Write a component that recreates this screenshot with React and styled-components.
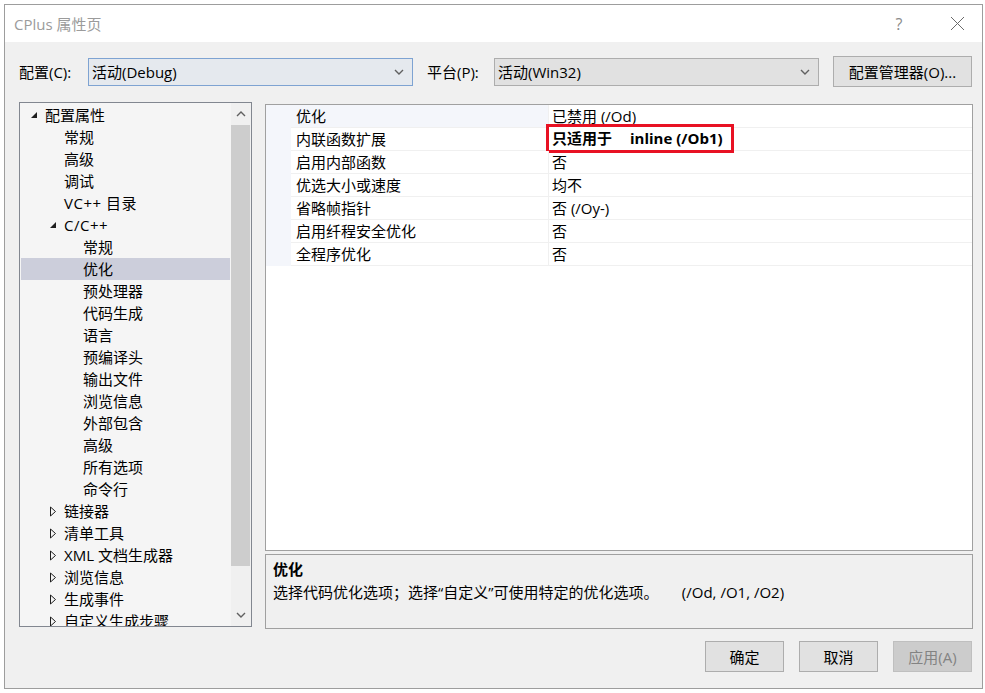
import React from "react";
import styled, { createGlobalStyle } from "styled-components";

const Global = createGlobalStyle`
  html, body { margin: 0; padding: 0; background: #ffffff; }
  body { font-family: "Open Sans", "Noto Sans CJK SC", sans-serif; font-size: 15px; color: #000; }
  * { box-sizing: border-box; }
`;

const Page = styled.div`
  padding: 4px 0 0 4px;
  width: 985px;
  height: 693px;
  overflow: hidden;
`;

const Window = styled.div`
  width: 979px;
  height: 685px;
  border: 1px solid #9d9d9d;
  background: #f0f0f0;
  display: flex;
  flex-direction: column;
`;

const TitleBar = styled.div`
  height: 37px;
  background: #ffffff;
  display: flex;
  align-items: center;
  padding-left: 9px;
  padding-right: 2px;
`;

const Title = styled.div`
  flex: 1;
  color: #9b9b9b;
  font-size: 15px;
  line-height: 20px;
`;

const TitleBtn = styled.div`
  width: 46px;
  margin-right: ${(p) => p.$mr || 0}px;
  display: flex;
  justify-content: center;
  align-items: center;
  color: #8a8a8a;
  font-size: 16px;
  line-height: 20px;
`;

const Body = styled.div`
  flex: 1;
  display: flex;
  flex-direction: column;
  padding: 14px 9px 0 14px;
`;

const ConfigRow = styled.div`
  display: flex;
  align-items: center;
  height: 31px;
`;

const Label = styled.div`
  width: ${(p) => p.$w}px;
  margin-left: ${(p) => p.$ml || 0}px;
  font-size: 15px;
  line-height: 20px;
`;

const Combo = styled.div`
  width: 325px;
  height: 28px;
  display: flex;
  align-items: center;
  padding: 0 8px 0 3px;
  background: ${(p) => (p.$focus ? "#e5e9ee" : "#e1e1e1")};
  border: 1px solid ${(p) => (p.$focus ? "#7ea3d2" : "#adadad")};
`;

const ComboText = styled.div`
  flex: 1;
  font-size: 15px;
  line-height: 20px;
`;

const Button = styled.div`
  width: ${(p) => p.$w}px;
  height: 31px;
  display: flex;
  align-items: center;
  justify-content: center;
  background: ${(p) => (p.$disabled ? "#cccccc" : "#e1e1e1")};
  border: 1px solid ${(p) => (p.$disabled ? "#bfbfbf" : "#adadad")};
  color: ${(p) => (p.$disabled ? "#838383" : "#000")};
  font-size: 15px;
  line-height: 20px;
  margin-left: ${(p) => p.$ml || 0}px;
`;

const Main = styled.div`
  display: flex;
  margin-top: 15px;
  height: 527px;
  gap: 13px;
`;

const TreePanel = styled.div`
  width: 233px;
  height: 525px;
  border: 1px solid #828790;
  background: #f5f5f5;
  display: flex;
`;

const TreeList = styled.div`
  flex: 1;
  overflow: hidden;
  padding-top: 1px;
`;

const TreeRow = styled.div`
  height: 22px;
  margin: 0 1px;
  display: flex;
  align-items: center;
  padding-left: ${(p) => 5 + p.$level * 19}px;
  background: ${(p) => (p.$sel ? "#cccedb" : "transparent")};
  white-space: nowrap;
`;

const Expander = styled.div`
  width: 19px;
  height: 22px;
  display: flex;
  align-items: center;
  padding-left: 4px;
`;

const TreeText = styled.div`
  font-size: 15px;
  line-height: 20px;
  ${(p) => (p.$wide ? "letter-spacing: 0.5px;" : "")}
`;

const ScrollBar = styled.div`
  width: 20px;
  display: flex;
  flex-direction: column;
  background: #f0f0f0;
`;

const ArrowBox = styled.div`
  height: 22px;
  display: flex;
  align-items: center;
  justify-content: center;
`;

const Track = styled.div`
  flex: 1;
`;

const Thumb = styled.div`
  height: 441px;
  margin: 0 1px 0 0;
  background: #cdcdcd;
`;

const RightCol = styled.div`
  width: 708px;
  padding-top: 2px;
  display: flex;
  flex-direction: column;
  gap: 3px;
`;

const Grid = styled.div`
  height: 447px;
  border: 1px solid #a0a0a0;
  background: #ffffff;
`;

const GridRow = styled.div`
  display: grid;
  grid-template-columns: 25px 258px 1fr;
  grid-template-rows: 23px;
  height: 23px;
`;

const Gutter = styled.div`
  background: #f4f6fb;
`;

const NameCell = styled.div`
  border-bottom: 1px solid #f0f0f0;
  border-right: 1px solid #f0f0f0;
  background: ${(p) => (p.$sel ? "#f4f6fb" : "#ffffff")};
  padding-left: 5px;
  display: flex;
  align-items: center;
  font-size: 15px;
  line-height: 20px;
  white-space: nowrap;
`;

const ValueCell = styled.div`
  border-bottom: 1px solid #f0f0f0;
  padding-left: 3px;
  display: flex;
  align-items: center;
  font-size: 15px;
  line-height: 20px;
  white-space: nowrap;
`;

const Highlight = styled.div`
  margin: -4px 0 -2px -6px;
  width: 188px;
  height: 29px;
  border: 3px solid #e81123;
  padding-left: 3px;
  display: flex;
  align-items: center;
  gap: 18px;
  font-weight: 700;
  background: #ffffff;
`;

const Desc = styled.div`
  height: 75px;
  border: 1px solid #a0a0a0;
  background: #f0f0f0;
  padding: 3px 0 0 7px;
`;

const DescTitle = styled.div`
  font-weight: 700;
  font-size: 15px;
  line-height: 23px;
`;

const DescText = styled.div`
  font-size: 15px;
  line-height: 23px;
  white-space: pre;
`;

const ButtonRow = styled.div`
  display: flex;
  justify-content: flex-end;
  margin-top: 12px;
  padding-right: 1px;
`;

const Chevron = ({ up, color = "#606060" }) => (
  <svg width="10" height="6" viewBox="0 0 10 6">
    <polyline
      points={up ? "1,5 5,1 9,5" : "1,1 5,5 9,1"}
      fill="none"
      stroke={color}
      strokeWidth="1.4"
    />
  </svg>
);

const OpenTri = () => (
  <svg width="8" height="8" viewBox="0 0 8 8">
    <polygon points="7,1 7,7 1,7" fill="#1e1e1e" />
  </svg>
);

const ClosedTri = () => (
  <svg width="8" height="11" viewBox="0 0 8 11">
    <polygon points="1.5,1 6.5,5.5 1.5,10" fill="none" stroke="#1e1e1e" strokeWidth="1" />
  </svg>
);

const tree = [
  { l: 0, e: "open", t: "配置属性" },
  { l: 1, t: "常规" },
  { l: 1, t: "高级" },
  { l: 1, t: "调试" },
  { l: 1, t: "VC++ 目录", w: true },
  { l: 1, e: "open", t: "C/C++", w: true },
  { l: 2, t: "常规" },
  { l: 2, t: "优化", s: true },
  { l: 2, t: "预处理器" },
  { l: 2, t: "代码生成" },
  { l: 2, t: "语言" },
  { l: 2, t: "预编译头" },
  { l: 2, t: "输出文件" },
  { l: 2, t: "浏览信息" },
  { l: 2, t: "外部包含" },
  { l: 2, t: "高级" },
  { l: 2, t: "所有选项" },
  { l: 2, t: "命令行" },
  { l: 1, e: "closed", t: "链接器" },
  { l: 1, e: "closed", t: "清单工具" },
  { l: 1, e: "closed", t: "XML 文档生成器" },
  { l: 1, e: "closed", t: "浏览信息" },
  { l: 1, e: "closed", t: "生成事件" },
  { l: 1, e: "closed", t: "自定义生成步骤" },
];

const props = [
  { n: "优化", v: "已禁用 (/Od)", s: true },
  { n: "内联函数扩展", hl: true },
  { n: "启用内部函数", v: "否" },
  { n: "优选大小或速度", v: "均不" },
  { n: "省略帧指针", v: "否 (/Oy-)" },
  { n: "启用纤程安全优化", v: "否" },
  { n: "全程序优化", v: "否" },
];

export default function App() {
  return (
    <Page>
      <Global />
      <Window>
        <TitleBar>
          <Title>CPlus 属性页</Title>
          <TitleBtn $mr={12}>?</TitleBtn>
          <TitleBtn>
            <svg width="15" height="15" viewBox="0 0 15 15">
              <path d="M1 1 L14 14 M14 1 L1 14" stroke="#6a6a6a" strokeWidth="1" />
            </svg>
          </TitleBtn>
        </TitleBar>
        <Body>
          <ConfigRow>
            <Label $w={69}>配置(C):</Label>
            <Combo $focus>
              <ComboText>活动(Debug)</ComboText>
              <Chevron />
            </Combo>
            <Label $w={67} $ml={14}>平台(P):</Label>
            <Combo>
              <ComboText>活动(Win32)</ComboText>
              <Chevron />
            </Combo>
            <Button $w={139} $ml={14}>配置管理器(O)...</Button>
          </ConfigRow>
          <Main>
            <TreePanel>
              <TreeList>
                {tree.map((r, i) => (
                  <TreeRow key={i} $level={r.l} $sel={r.s}>
                    <Expander>
                      {r.e === "open" && <OpenTri />}
                      {r.e === "closed" && <ClosedTri />}
                    </Expander>
                    <TreeText $wide={r.w}>{r.t}</TreeText>
                  </TreeRow>
                ))}
              </TreeList>
              <ScrollBar>
                <ArrowBox>
                  <Chevron up />
                </ArrowBox>
                <Track>
                  <Thumb />
                </Track>
                <ArrowBox>
                  <Chevron />
                </ArrowBox>
              </ScrollBar>
            </TreePanel>
            <RightCol>
              <Grid>
                {props.map((p, i) => (
                  <GridRow key={i}>
                    <Gutter />
                    <NameCell $sel={p.s}>{p.n}</NameCell>
                    <ValueCell>
                      {p.hl ? (
                        <Highlight>
                          <span>只适用于</span>
                          <span>inline (/Ob1)</span>
                        </Highlight>
                      ) : (
                        p.v
                      )}
                    </ValueCell>
                  </GridRow>
                ))}
              </Grid>
              <Desc>
                <DescTitle>优化</DescTitle>
                <DescText>{"选择代码优化选项；选择“自定义”可使用特定的优化选项。      (/Od, /O1, /O2)"}</DescText>
              </Desc>
            </RightCol>
          </Main>
          <ButtonRow>
            <Button $w={79}>确定</Button>
            <Button $w={79} $ml={15}>取消</Button>
            <Button $w={79} $ml={15} $disabled>应用(A)</Button>
          </ButtonRow>
        </Body>
      </Window>
    </Page>
  );
}
